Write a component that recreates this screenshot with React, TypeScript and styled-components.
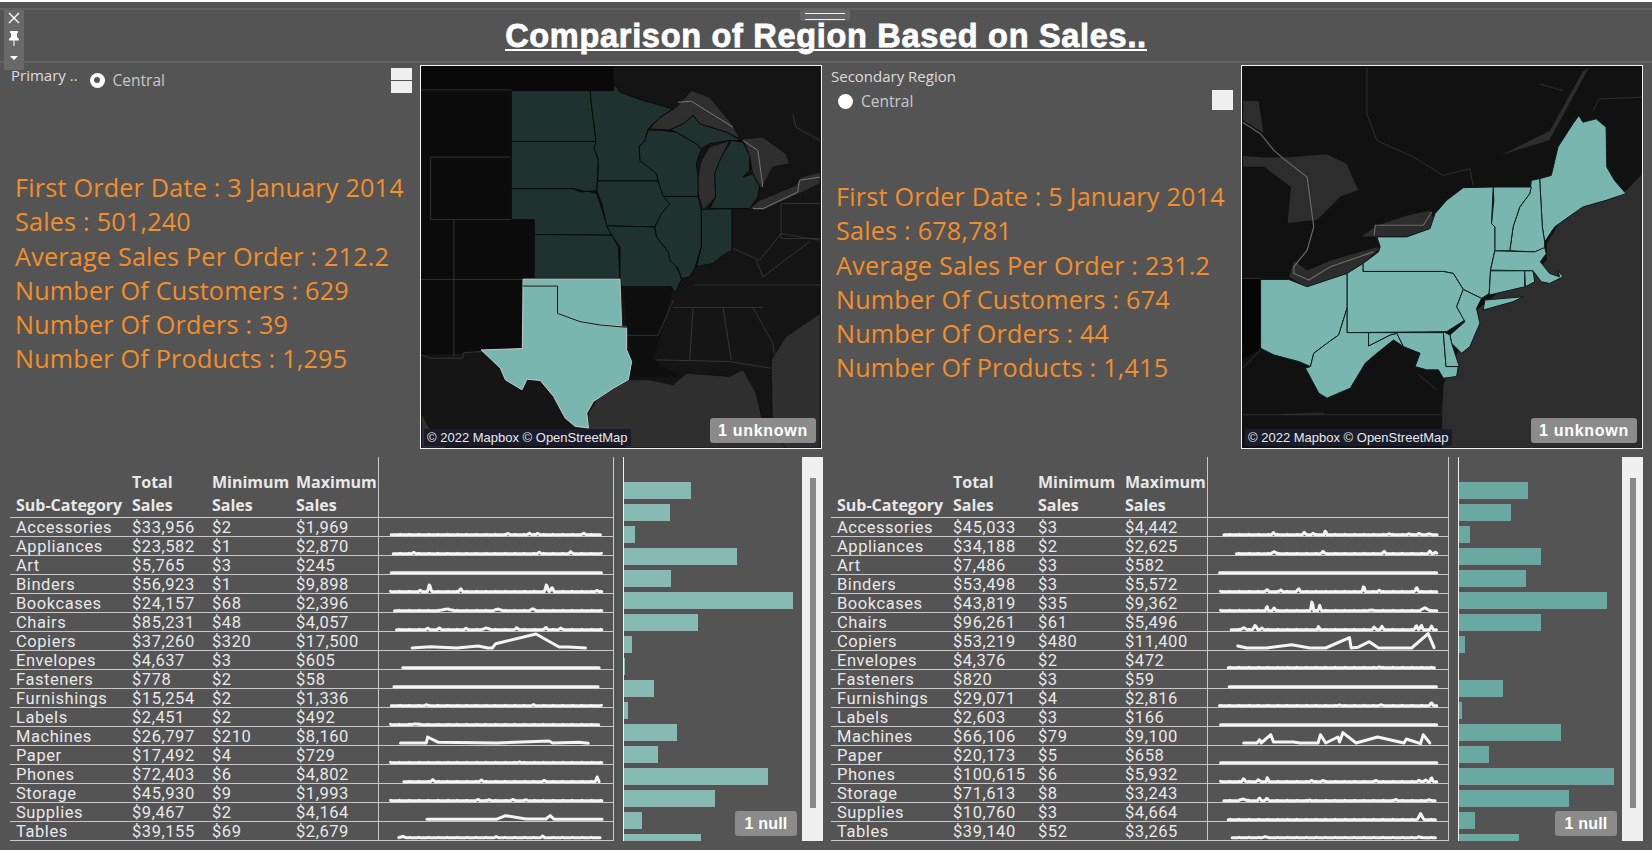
import React from 'react';
import styled, { createGlobalStyle } from 'styled-components';

type Bump = [number, number, number?];
interface Spark {
  from?: number;
  to?: number;
  base?: number;
  bumps?: Bump[];
  points?: [number, number][];
}
interface SalesRow {
  name: string;
  total: string;
  min: string;
  max: string;
  spark: Spark;
  bar: number;
}
interface Metric {
  label: string;
  value: string;
}

const GlobalStyle = createGlobalStyle`
  html, body { margin: 0; padding: 0; background: #545454; }
  * { box-sizing: border-box; }
`;

const leftRows: SalesRow[] = [
  { name: 'Accessories', total: '$33,956', min: '$2', max: '$1,969', bar: 67, spark: { from: 62, to: 696, bumps: [[415, 4], [480, 5], [505, 4], [645, 5]] } },
  { name: 'Appliances', total: '$23,582', min: '$1', max: '$2,870', bar: 46, spark: { from: 68, to: 700, bumps: [[130, 4], [510, 5], [605, 6]] } },
  { name: 'Art', total: '$5,765', min: '$3', max: '$245', bar: 11, spark: { from: 62, to: 700 } },
  { name: 'Binders', total: '$56,923', min: '$1', max: '$9,898', bar: 113, spark: { from: 60, to: 700, bumps: [[150, 4], [178, 24, 6], [272, 10], [532, 24, 6], [548, 14], [685, 4]] } },
  { name: 'Bookcases', total: '$24,157', min: '$68', max: '$2,396', bar: 47, spark: { from: 72, to: 700, bumps: [[230, 5, 25], [385, 5, 15], [490, 6, 10]] } },
  { name: 'Chairs', total: '$85,231', min: '$48', max: '$4,057', bar: 169, spark: { from: 78, to: 700, bumps: [[172, 5], [208, 6], [288, 4], [350, 5, 15], [442, 7], [530, 8], [575, 6]] } },
  { name: 'Copiers', total: '$37,260', min: '$320', max: '$17,500', bar: 74, spark: { points: [[125, 48], [180, 44], [260, 48], [325, 42], [355, 48], [368, 48], [378, 35], [500, 6], [570, 45], [600, 45], [650, 48]] } },
  { name: 'Envelopes', total: '$4,637', min: '$3', max: '$605', bar: 8, spark: { from: 97, to: 692 } },
  { name: 'Fasteners', total: '$778', min: '$2', max: '$58', bar: 1.3, spark: { from: 70, to: 690 } },
  { name: 'Furnishings', total: '$15,254', min: '$2', max: '$1,336', bar: 30, spark: { from: 62, to: 700, bumps: [[168, 3], [492, 3]] } },
  { name: 'Labels', total: '$2,451', min: '$2', max: '$492', bar: 4, spark: { from: 60, to: 690, bumps: [[135, 2, 20]] } },
  { name: 'Machines', total: '$26,797', min: '$210', max: '$8,160', bar: 53, spark: { points: [[90, 48], [168, 48], [172, 30], [205, 46], [380, 48], [540, 42], [550, 48], [630, 46], [658, 49]] } },
  { name: 'Paper', total: '$17,492', min: '$4', max: '$729', bar: 34, spark: { from: 60, to: 700, bumps: [[450, 2]] } },
  { name: 'Phones', total: '$72,403', min: '$6', max: '$4,802', bar: 144, spark: { from: 100, to: 692, bumps: [[188, 7], [335, 6], [525, 4], [685, 14, 6]] } },
  { name: 'Storage', total: '$45,930', min: '$9', max: '$1,993', bar: 91, spark: { from: 60, to: 700, bumps: [[325, 4], [358, 3], [430, 4], [470, 3]] } },
  { name: 'Supplies', total: '$9,467', min: '$2', max: '$4,164', bar: 18, spark: { points: [[170, 49], [380, 49], [408, 38], [470, 48], [530, 48], [543, 38], [555, 49], [700, 49]] } },
  { name: 'Tables', total: '$39,155', min: '$69', max: '$2,679', bar: 77, spark: { from: 85, to: 695, base: 47, bumps: [[97, 4, 10], [380, 3], [520, 5]] } },
];

const rightRows: SalesRow[] = [
  { name: 'Accessories', total: '$45,033', min: '$3', max: '$4,442', bar: 69, spark: { from: 70, to: 715, bumps: [[220, 6], [313, 7], [340, 4], [377, 14, 4], [570, 3], [630, 3], [660, 4], [690, 3]] } },
  { name: 'Appliances', total: '$34,188', min: '$2', max: '$2,625', bar: 52, spark: { from: 108, to: 715, bumps: [[222, 6, 10], [370, 8], [555, 7], [693, 8], [710, 5]] } },
  { name: 'Art', total: '$7,486', min: '$3', max: '$582', bar: 11, spark: { from: 57, to: 715 } },
  { name: 'Binders', total: '$53,498', min: '$3', max: '$5,572', bar: 82, spark: { from: 60, to: 715, bumps: [[200, 7], [242, 6], [296, 10], [493, 18, 5], [540, 4], [653, 14, 6]] } },
  { name: 'Bookcases', total: '$43,819', min: '$35', max: '$9,362', bar: 67, spark: { from: 60, to: 715, bumps: [[200, 16, 4], [222, 8], [337, 32, 5], [360, 16, 5], [515, 2, 10], [678, 9, 15]] } },
  { name: 'Chairs', total: '$96,261', min: '$61', max: '$5,496', bar: 148, spark: { from: 92, to: 715, bumps: [[130, 6, 10], [165, 14, 8], [185, 5], [357, 14, 3], [525, 8], [548, 10], [652, 14], [667, 14], [698, 10]] } },
  { name: 'Copiers', total: '$53,219', min: '$480', max: '$11,400', bar: 82, spark: { points: [[112, 42], [140, 48], [200, 48], [275, 38], [330, 48], [378, 48], [450, 17], [455, 48], [475, 46], [510, 29], [538, 48], [638, 48], [688, 5], [706, 47]] } },
  { name: 'Envelopes', total: '$4,376', min: '$2', max: '$472', bar: 6, spark: { from: 83, to: 708, bumps: [[540, 2]] } },
  { name: 'Fasteners', total: '$820', min: '$3', max: '$59', bar: 0, spark: { from: 86, to: 715 } },
  { name: 'Furnishings', total: '$29,071', min: '$4', max: '$2,816', bar: 44, spark: { from: 57, to: 715, bumps: [[420, 2], [545, 3], [698, 10, 6]] } },
  { name: 'Labels', total: '$2,603', min: '$3', max: '$166', bar: 3, spark: { from: 60, to: 715 } },
  { name: 'Machines', total: '$66,106', min: '$79', max: '$9,100', bar: 102, spark: { points: [[130, 48], [170, 48], [178, 38], [183, 48], [212, 23], [220, 45], [280, 45], [300, 48], [355, 48], [362, 23], [378, 48], [415, 30], [420, 45], [430, 17], [470, 48], [535, 30], [615, 48], [622, 36], [665, 50], [673, 23], [693, 48]] } },
  { name: 'Paper', total: '$20,173', min: '$5', max: '$658', bar: 30, spark: { from: 60, to: 715 } },
  { name: 'Phones', total: '$100,615', min: '$6', max: '$5,932', bar: 155, spark: { from: 60, to: 715, bumps: [[130, 10], [175, 5, 8], [202, 18, 3], [335, 4], [370, 4], [530, 4], [660, 4], [680, 6], [698, 14, 5]] } },
  { name: 'Storage', total: '$71,613', min: '$8', max: '$3,243', bar: 110, spark: { from: 70, to: 710, bumps: [[128, 5, 15], [178, 8], [200, 8], [330, 2], [590, 4], [690, 3]] } },
  { name: 'Supplies', total: '$10,760', min: '$3', max: '$4,664', bar: 16, spark: { from: 83, to: 710, bumps: [[665, 18, 10]] } },
  { name: 'Tables', total: '$39,140', min: '$52', max: '$3,265', bar: 60, spark: { from: 95, to: 712, base: 47, bumps: [[195, 3, 10], [660, 3]] } },
];

const leftMetrics: Metric[] = [
  { label: 'First Order Date', value: '3 January 2014' },
  { label: 'Sales', value: '501,240' },
  { label: 'Average Sales Per Order', value: '212.2' },
  { label: 'Number Of Customers', value: '629' },
  { label: 'Number Of Orders', value: '39' },
  { label: 'Number Of Products', value: '1,295' },
];

const rightMetrics: Metric[] = [
  { label: 'First Order Date', value: '5 January 2014' },
  { label: 'Sales', value: '678,781' },
  { label: 'Average Sales Per Order', value: '231.2' },
  { label: 'Number Of Customers', value: '674' },
  { label: 'Number Of Orders', value: '44' },
  { label: 'Number Of Products', value: '1,415' },
];

// map shapes are in zoomed-in pixel units, hence the big viewBox
const centralDim = [
  '303,90 540,90 545,140 558,243 303,243',
  '303,243 558,243 552,262 565,300 560,390 530,395 490,385 303,385',
  '303,385 490,385 510,395 535,393 560,400 580,460 590,495 605,525 372,523 372,478 303,478',
  '372,523 605,525 625,560 630,655 372,655',
  '540,90 610,90 612,70 630,95 700,120 790,145 750,170 715,205 705,240 688,258 690,300 740,340 745,362 563,362 565,300 552,262 558,243 545,140',
  '563,362 745,362 760,405 780,430 755,460 735,500 590,497 575,430 560,390',
  '590,497 735,500 740,530 775,575 810,640 815,660 805,680 795,698 785,680 634,680 630,655 630,560 605,525',
  '760,408 865,408 875,450 875,560 855,625 840,650 815,655 805,625 780,600 775,575 740,530 735,500 755,460 780,430',
  '875,447 967,445 967,570 935,590 910,610 860,620 875,560',
  '715,208 760,210 800,215 860,250 875,265 860,310 865,350 865,408 760,408 745,362 740,340 690,300 688,258 705,240',
  '780,208 820,190 850,165 870,190 950,215 995,240 960,240 900,250 875,265 860,250 800,215',
  '900,445 918,410 915,340 935,290 965,240 1000,245 1020,285 1020,330 1000,350 1030,340 1050,380 1045,410 1020,445',
];
const centralLakes = [
  '880,450 865,400 865,350 875,300 900,260 960,240 935,290 915,340 918,410',
  '720,205 745,175 800,140 845,90 900,110 970,195 990,235 950,215 870,190 850,165 820,190 780,208',
  '1000,235 1060,230 1130,280 1140,310 1090,320 1055,385 1030,340 1020,285',
  '1020,445 1050,420 1160,375 1175,350 1232,335 1232,370 1170,400 1060,450',
  '1090,1165 1085,900 1130,830 1232,760 1232,1165',
  '530,1105 535,1060 560,1020 610,985 660,960 720,960 790,975 830,940 960,950 1000,930 1040,1000 1060,1090 1130,1165 650,1165',
  '32,1060 60,1110 110,1165 32,1165',
];
const centralLines = [
  '32,88 303,88', '303,88 303,478 372,478 372,655', '60,290 300,290', '60,290 60,478 300,478',
  '130,478 130,890', '32,658 336,658', '32,885 60,895 155,895 160,878 212,875',
  '855,675 1232,675', '790,742 1060,742', '850,742 840,900', '940,742 965,900',
  '650,826 745,826', '745,826 790,720', '740,900 960,905 1085,925', '1030,742 1090,850 1100,920',
  '970,565 1050,600 1115,520 1232,540', '1040,600 1060,650 1200,545', '1115,430 1115,535 1232,535', '1232,430 1115,430',
  '1150,160 1160,200 1232,240',
];
const centralBorder = ['805,125 845,122 970,200', '1000,240 1045,270 1060,380', '1030,445 1060,445 1165,395 1170,360 1232,350'];
const texas = '338,678 442,678 442,760 510,785 570,795 650,802 650,870 665,905 655,960 610,985 550,1025 530,1060 535,1105 495,1100 465,1075 430,1010 390,962 350,958 335,990 285,960 270,925 212,870 336,866';
const oklahoma = '338,657 630,657 635,797 570,795 510,785 442,760 442,678 338,678';

const eastStates = [
  '930,355 965,345 985,260 1030,190 1048,165 1060,185 1100,175 1130,200 1132,320 1155,360 1190,400 1130,420 1060,440 1010,475 975,500 945,545 938,500',
  '905,360 930,355 938,500 945,545 945,565 915,575 840,572 850,500 870,440 900,400',
  '790,380 905,380 900,400 870,440 850,500 840,572 795,572 795,500 785,490 792,420',
  '700,382 790,380 785,490 795,500 795,572 782,630 778,700 755,715 700,688 670,640 640,634 398,634 398,610 445,575 450,560 440,530 530,530 600,505 615,460 650,420',
  '765,720 880,710 850,725 760,750',
  '795,572 915,575 945,562 950,580 932,605 960,640 990,650 985,630 1000,650 960,670 935,665 910,632 782,630',
  '782,632 885,632 885,680 778,705',
  '885,632 910,632 915,665 887,680',
  '350,640 398,610 398,634 640,634 670,640 700,688 680,740 705,780 650,815 350,818',
  '700,688 755,715 740,745 750,790 720,860 695,880 665,850 660,825 705,785 680,740',
  '90,658 175,658 230,680 350,640 350,745 325,825 290,850 250,880 240,920 205,905 130,885 90,865',
  '350,818 415,818 415,858 480,825 500,820 520,860 490,840 440,880 405,910 360,985 290,1015 265,1000 225,925 240,920 250,880 290,850 325,825 350,745',
  '415,818 640,818 648,920 685,920 680,950 640,955 625,930 590,930 555,920 570,880 520,860 500,820 480,825 415,858',
  '640,815 660,825 665,850 688,920 648,920',
];
const eastWater = [
  '635,1165 635,1050 640,970 690,860 720,830 745,745 800,700 900,650 950,600 950,550 1000,470 1130,400 1190,390 1238,340 1238,1165',
  '390,530 440,495 530,465 600,450 615,480 600,505 530,530 440,530',
  '175,650 190,600 230,630 300,600 440,560 450,565 398,610 350,640 230,685',
  '36,285 100,290 170,290 290,280 350,310 385,390 330,410 260,480 170,490 180,380 100,320 36,320',
  '36,120 85,120 100,220 36,180',
  '800,290 960,210 1060,30 1080,20 960,240 830,280',
];
const eastLines = [
  '36,185 90,220 130,270 165,300 230,350 250,500 230,570 190,620 190,640 235,660 300,620 430,575',
  '432,525 435,495 580,495 605,455', '410,20 410,160 440,240 550,290 640,345 720,325 730,375',
  '36,655 90,655', '36,1065 635,1065', '160,1065 280,1060', '36,925 90,870', '560,940 620,990',
  '1090,150 1110,115 1238,110', '930,70 1000,90',
];

const Page = styled.div`
  width: 1652px;
  height: 850px;
  overflow: hidden;
  background: #545454;
  border-top: 2px solid #fff;
  position: relative;
  font-family: 'Open Sans', 'Liberation Sans', sans-serif;
`;

const TitleBar = styled.header`
  height: 55px;
  margin-top: 6px;
  border-top: 2px solid #636363;
  border-bottom: 2px solid #636363;
  display: flex;
  justify-content: center;
  align-items: flex-start;
`;

const Title = styled.h1`
  margin: 13px 0 0;
  font: bold 32.5px/26px 'Liberation Sans', Arial, sans-serif;
  color: #fff;
  letter-spacing: 0.7px;
  -webkit-text-stroke: 0.8px #fff;
  border-bottom: 2px solid #fff;
`;

const DragHandle = styled.div`
  position: absolute;
  left: 800px;
  top: 8px;
  width: 50px;
  height: 11px;
  background: #666;
  border-radius: 0 0 3px 3px;

  &::after {
    content: '';
    position: absolute;
    left: 5px;
    right: 5px;
    top: 3px;
    height: 5px;
    border-top: 1px solid #f2f2f2;
    border-bottom: 1px solid #f2f2f2;
  }
`;

const TabRail = styled.div`
  position: absolute;
  left: 4px;
  top: 8px;
  width: 20px;
  height: 60px;
  background: #696969;
  display: flex;
  flex-direction: column;
  align-items: center;
  padding-top: 2px;
  gap: 7px;
`;

const Dashboard = styled.main`
  display: grid;
  grid-template-columns: 822px 821px;
`;

const Half = styled.section`
  display: flex;
  flex-direction: column;
  gap: 8px;
  padding-top: 2px;
`;

const TopRow = styled.div`
  display: flex;
  height: 384px;
`;

const SidePanel = styled.div`
  flex: 1;
  position: relative;
  min-width: 0;
`;

const FilterLabel = styled.div`
  font-size: 15px;
  line-height: 20px;
  color: #dcdcdc;
  white-space: nowrap;
`;

const FilterBlock = styled.div<{ $stacked?: boolean }>`
  display: flex;
  flex-direction: ${(p) => (p.$stacked ? 'column' : 'row')};
  align-items: flex-start;
  gap: ${(p) => (p.$stacked ? '6px' : '12px')};
  padding: ${(p) => (p.$stacked ? '1px 0 0 9px' : '0 0 0 11px')};
  height: ${(p) => (p.$stacked ? '114px' : '105px')};
`;

const RadioRow = styled.div<{ $indent?: number; $drop?: number }>`
  display: flex;
  align-items: center;
  gap: 8px;
  margin-left: ${(p) => p.$indent ?? 0}px;
  margin-top: ${(p) => p.$drop ?? 0}px;
  font-size: 15.5px;
  line-height: 18px;
  color: #c9c9c9;
`;

const RadioDot = styled.span<{ $checked?: boolean }>`
  width: 15px;
  height: 15px;
  border-radius: 50%;
  background: #fff;
  display: flex;
  align-items: center;
  justify-content: center;

  &::after {
    content: '';
    width: 6px;
    height: 6px;
    border-radius: 50%;
    background: ${(p) => (p.$checked ? '#555' : '#fff')};
  }
`;

const SwatchStack = styled.div<{ $top: number }>`
  position: absolute;
  left: ${(p) => (p.$top > 10 ? '390px' : '391px')};
  top: ${(p) => p.$top}px;
  width: 21px;
  display: flex;
  flex-direction: column;
  gap: 1px;
`;

const Swatch = styled.div<{ $h: number }>`
  height: ${(p) => p.$h}px;
  background: #efefef;
`;

const MetricList = styled.div<{ $indent: number }>`
  padding-left: ${(p) => p.$indent}px;
`;

const MetricLine = styled.div`
  font-size: 25.2px;
  letter-spacing: 0.2px;
  line-height: 34.3px;
  color: #f28e2b;
  white-space: nowrap;
`;

const MapFrame = styled.figure`
  margin: 0;
  flex: 0 0 402px;
  height: 384px;
  border: 1px solid #f2f2f2;
  position: relative;
  overflow: hidden;
  background: #131313;

  svg {
    display: block;
    width: 100%;
    height: 100%;
  }
`;

const Attribution = styled.figcaption`
  position: absolute;
  left: 3px;
  bottom: 2px;
  height: 17px;
  padding: 0 3px;
  background: #1a1c2b;
  color: #e8e8e8;
  font: 13px/17px 'Liberation Sans', Arial, sans-serif;
  white-space: nowrap;
`;

const Pill = styled.div<{ $w: number; $right: number; $bottom: number; $track?: number }>`
  position: absolute;
  right: ${(p) => p.$right}px;
  bottom: ${(p) => p.$bottom}px;
  width: ${(p) => p.$w}px;
  height: 25px;
  border-radius: 3px;
  background: #8b8b8b;
  color: #fff;
  font: bold 16px/25px 'Liberation Sans', Arial, sans-serif;
  letter-spacing: ${(p) => p.$track ?? 0.2}px;
  text-align: center;
`;

const BottomRow = styled.div<{ $pad: number }>`
  display: flex;
  height: 384px;
  padding-left: ${(p) => p.$pad}px;
`;

const TableWrap = styled.div``;

const Row = styled.div<{ $cols: string; $header?: boolean }>`
  display: grid;
  grid-template-columns: ${(p) => p.$cols};
  height: ${(p) => (p.$header ? '61px' : '19px')};
  border-bottom: 1px solid #c8c8c8;
  color: #e8e8e8;
  font-family: ${(p) => (p.$header ? "'Open Sans'" : 'Roboto')}, sans-serif;
  font-size: ${(p) => (p.$header ? '16px' : '16.5px')};
  letter-spacing: ${(p) => (p.$header ? '0' : '0.55px')};
  font-weight: ${(p) => (p.$header ? 700 : 400)};
  line-height: ${(p) => (p.$header ? '23px' : '19px')};
`;

const Cell = styled.div<{ $header?: boolean }>`
  padding-left: 6px;
  white-space: nowrap;
  align-self: ${(p) => (p.$header ? 'end' : 'start')};
`;

const NumCell = styled(Cell)`
  padding-left: 0;
`;

const SparkCell = styled.div`
  border-left: 1px solid #c8c8c8;
  border-right: 1px solid #c8c8c8;
  min-width: 0;

  svg {
    display: block;
    width: 100%;
    height: 19px;
    overflow: visible;
  }
`;

const BarColumn = styled.div<{ $w: number }>`
  flex: 0 0 ${(p) => p.$w}px;
  margin-left: 9px;
  height: 384px;
  border-left: 1px solid #f0f0f0;
  padding-top: 25px;
  display: flex;
  flex-direction: column;
  gap: 5px;
  overflow: hidden;
  position: relative;
`;

const Bar = styled.div<{ $color: string }>`
  flex: 0 0 17px;
  background: ${(p) => p.$color};
`;

const ScrollTrack = styled.div`
  flex: 0 0 21px;
  height: 384px;
  background: #f0f0f0;
  padding: 21px 7px 33px 8px;
`;

const ScrollThumb = styled.div`
  height: 100%;
  background: #888;
`;

// walks the line left to right, raising it under each bump, with a small wobble
const sparkPoints = (s: Spark): string => {
  if (s.points) return s.points.map(([x, y]) => `${x},${y}`).join(' ');
  const base = s.base ?? 50;
  const bumps = s.bumps ?? [];
  const out: string[] = [];
  for (let x = s.from ?? 0; x <= (s.to ?? 0); x += 3) {
    let h = 0;
    bumps.forEach(([bx, bh, w]) => {
      h = Math.max(h, bh * (1 - Math.abs(x - bx) / (w ?? 6)));
    });
    const wobble = bumps.length && x % 29 < 3 ? 1 : 0;
    out.push(`${x},${base - h - wobble}`);
  }
  return out.join(' ');
};

const SparkLine: React.FC<{ spark: Spark; x0: number; width: number }> = ({ spark, x0, width }) => (
  <svg viewBox={`${x0} 0 ${width} 57`} preserveAspectRatio="none">
    <polyline
      points={sparkPoints(spark)}
      fill="none"
      stroke="#f4f4f4"
      strokeWidth="9"
      strokeLinejoin="round"
      strokeLinecap="round"
    />
  </svg>
);

const CentralMap: React.FC = () => (
  <svg viewBox="31 16 1204 1149" preserveAspectRatio="none">
    <rect x="31" y="16" width="1204" height="1149" fill="#141414" />
    <polygon points="32,88 303,88 303,478 372,478 372,655 336,655 336,866 212,870 160,880 32,885" fill="#0b0b0b" />
    <polygon points="32,16 610,16 610,88 32,88" fill="#090909" />
    <polygon points="640,680 790,680 760,800 730,900 810,950 650,955 665,905 650,800" fill="#0e0e0e" />
    {centralLines.map((p) => (
      <polyline key={p} points={p} fill="none" stroke="#3a3a3a" strokeWidth="2.5" />
    ))}
    {centralLakes.map((p) => (
      <polygon key={p} points={p} fill="#2f2f2f" stroke="#0c0c0c" strokeWidth="2" />
    ))}
    {centralBorder.map((p) => (
      <polyline key={p} points={p} fill="none" stroke="#777" strokeWidth="3" />
    ))}
    {centralDim.map((p) => (
      <polygon key={p} points={p} fill="#1f3230" stroke="#090909" strokeWidth="3" />
    ))}
    <polygon points={texas} fill="#79b6b0" stroke="#c9c9c9" strokeWidth="3" />
    <polygon points={oklahoma} fill="#79b6b0" stroke="#bdbdbd" strokeWidth="3" />
    <polyline points="338,678 442,678 442,760 510,785 570,795 650,802" fill="none" stroke="#111" strokeWidth="3" />
  </svg>
);

const EastMap: React.FC = () => (
  <svg viewBox="34 16 1204 1149" preserveAspectRatio="none">
    <rect x="34" y="16" width="1204" height="1149" fill="#111" />
    <polygon points="36,655 90,655 90,865 36,900" fill="#060606" />
    {eastWater.map((p) => (
      <polygon key={p} points={p} fill="#2d2d2d" stroke="#0d0d0d" strokeWidth="2" />
    ))}
    {eastLines.map((p, i) => (
      <polyline key={p} points={p} fill="none" stroke={i < 2 ? '#6b6b6b' : '#353535'} strokeWidth={i < 2 ? 3.5 : 2.5} />
    ))}
    {eastStates.map((p) => (
      <polygon key={p} points={p} fill="#79b6b0" stroke="#0e1a19" strokeWidth="3" />
    ))}
  </svg>
);

interface SalesTableProps {
  rows: SalesRow[];
  cols: string;
  sparkX0: number;
  sparkWidth: number;
  barWidth: number;
  barColor: string;
  pad: number;
}

const SalesTable: React.FC<SalesTableProps> = ({ rows, cols, sparkX0, sparkWidth, barWidth, barColor, pad }) => (
  <BottomRow $pad={pad}>
    <TableWrap>
      <Row $cols={cols} $header>
        <Cell $header>Sub-Category</Cell>
        <NumCell $header>
          Total
          <br />
          Sales
        </NumCell>
        <NumCell $header>
          Minimum
          <br />
          Sales
        </NumCell>
        <NumCell $header>
          Maximum
          <br />
          Sales
        </NumCell>
        <SparkCell />
      </Row>
      {rows.map((r) => (
        <Row $cols={cols} key={r.name}>
          <Cell>{r.name}</Cell>
          <NumCell>{r.total}</NumCell>
          <NumCell>{r.min}</NumCell>
          <NumCell>{r.max}</NumCell>
          <SparkCell>
            <SparkLine spark={r.spark} x0={sparkX0} width={sparkWidth} />
          </SparkCell>
        </Row>
      ))}
    </TableWrap>
    <BarColumn $w={barWidth}>
      {rows.map((r) => (
        <Bar key={r.name} $color={barColor} style={{ width: r.bar }} />
      ))}
      <Pill $w={62} $right={5} $bottom={5}>
        1 null
      </Pill>
    </BarColumn>
    <ScrollTrack>
      <ScrollThumb />
    </ScrollTrack>
  </BottomRow>
);

const MetricBlock: React.FC<{ items: Metric[]; indent: number }> = ({ items, indent }) => (
  <MetricList $indent={indent}>
    {items.map((m) => (
      <MetricLine key={m.label}>
        {m.label} : {m.value}
      </MetricLine>
    ))}
  </MetricList>
);

const App: React.FC = () => (
  <>
    <GlobalStyle />
    <Page>
      <TitleBar>
        <Title>Comparison of Region Based on Sales..</Title>
      </TitleBar>
      <DragHandle />
      <TabRail>
        <svg width="12" height="12" viewBox="0 0 12 12">
          <path d="M1 1l10 10M11 1L1 11" stroke="#fff" strokeWidth="1.4" />
        </svg>
        <svg width="12" height="15" viewBox="0 0 12 15">
          <path d="M2 0h8v1.5L9 2.5v3.5l2 2v1.5H1V8l2-2V2.5L2 1.5zM5.5 9.5h1V15h-1z" fill="#fff" />
        </svg>
        <svg width="10" height="10" viewBox="0 0 10 10">
          <path d="M1 3h8L5 7z" fill="#fff" />
        </svg>
      </TabRail>
      <Dashboard>
        <Half>
          <TopRow>
            <SidePanel>
              <FilterBlock>
                <FilterLabel>Primary ..</FilterLabel>
                <RadioRow $indent={0} $drop={6}>
                  <RadioDot $checked />
                  Central
                </RadioRow>
              </FilterBlock>
              <SwatchStack $top={3}>
                <Swatch $h={12} />
                <Swatch $h={12} />
              </SwatchStack>
              <MetricBlock items={leftMetrics} indent={15} />
            </SidePanel>
            <MapFrame>
              <CentralMap />
              <Attribution>© 2022 Mapbox © OpenStreetMap</Attribution>
              <Pill $w={106} $right={5} $bottom={5} $track={0.7}>
                1 unknown
              </Pill>
            </MapFrame>
          </TopRow>
          <SalesTable
            rows={leftRows}
            cols="122px 80px 84px 82px 236px"
            sparkX0={25}
            sparkWidth={708}
            barWidth={179}
            barColor="#86bab3"
            pad={10}
          />
        </Half>
        <Half>
          <TopRow>
            <SidePanel>
              <FilterBlock $stacked>
                <FilterLabel>Secondary Region</FilterLabel>
                <RadioRow $indent={7}>
                  <RadioDot />
                  Central
                </RadioRow>
              </FilterBlock>
              <SwatchStack $top={25}>
                <Swatch $h={20} />
              </SwatchStack>
              <MetricBlock items={rightMetrics} indent={14} />
            </SidePanel>
            <MapFrame>
              <EastMap />
              <Attribution>© 2022 Mapbox © OpenStreetMap</Attribution>
              <Pill $w={106} $right={5} $bottom={5} $track={0.7}>
                1 unknown
              </Pill>
            </MapFrame>
          </TopRow>
          <SalesTable
            rows={rightRows}
            cols="122px 85px 87px 82px 242px"
            sparkX0={22}
            sparkWidth={726}
            barWidth={164}
            barColor="#6aa8a2"
            pad={9}
          />
        </Half>
      </Dashboard>
    </Page>
  </>
);

export default App;
